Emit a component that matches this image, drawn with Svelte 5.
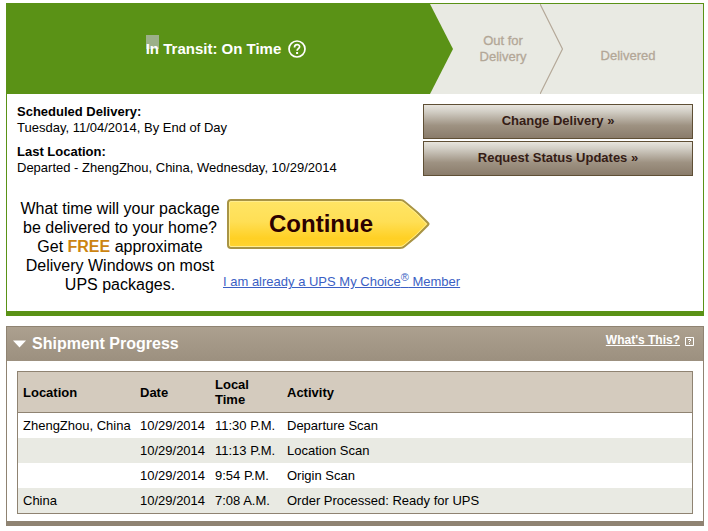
<script>
  const trackingNote = {
    delivery: 'Tuesday, 11/04/2014, By End of Day',
    location: 'Departed - ZhengZhou, China, Wednesday, 10/29/2014'
  }

  const scans = [
    { location: 'ZhengZhou, China', date: '10/29/2014', time: '11:30 P.M.', activity: 'Departure Scan' },
    { location: '', date: '10/29/2014', time: '11:13 P.M.', activity: 'Location Scan' },
    { location: '', date: '10/29/2014', time: '9:54 P.M.', activity: 'Origin Scan' },
    { location: 'China', date: '10/29/2014', time: '7:08 A.M.', activity: 'Order Processed: Ready for UPS' }
  ]
</script>

<main>
  <section class="status">
    <!-- Delivery steps -->
    <div class="steps">
      <div class="step current">
        <span><mark>In</mark> Transit: On Time</span>
        <svg class="help" viewBox="0 0 18 18" aria-hidden="true">
          <circle cx="9" cy="9" r="8" />
          <path d="M6.500 7.400c0-3.700 5.100-3.500 5.100-.6 0 1.900-2.500 1.900-2.500 4" />
          <rect x="8.100" y="12" width="2" height="2" />
        </svg>
      </div>
      <svg class="arrow" viewBox="0 0 23 90" aria-hidden="true">
        <path class="solid" d="M0 0L23 45L0 90z" />
      </svg>
      <div class="step next">Out for Delivery</div>
      <svg class="arrow" viewBox="0 0 23 90" aria-hidden="true">
        <path class="line" d="M0 0L22.5 45L0 90" />
      </svg>
      <div class="step last">Delivered</div>
    </div>

    <div class="summary">
      <dl>
        <dt>Scheduled Delivery:</dt>
        <dd>{trackingNote.delivery}</dd>
        <dt>Last Location:</dt>
        <dd>{trackingNote.location}</dd>
      </dl>
      <div class="actions">
        <button>Change Delivery »</button>
        <button>Request Status Updates »</button>
      </div>
    </div>

    <!-- My Choice promo -->
    <div class="promo">
      <p>What time will your package be delivered to your home? Get <strong>FREE</strong> approximate Delivery Windows on most UPS packages.</p>
      <div class="join">
        <button class="continue">
          <svg viewBox="0 0 204 52" aria-hidden="true">
            <defs>
              <linearGradient id="gold" x1="0" y1="0" x2="0" y2="1">
                <stop offset="0" stop-color="#ffe566" />
                <stop offset="0.45" stop-color="#ffdf55" />
                <stop offset="0.8" stop-color="#ffd024" />
                <stop offset="1" stop-color="#ffd433" />
              </linearGradient>
            </defs>
            <path class="edge" d="M5 2H174Q177 2 179 4Q192 14 202 25Q203 26 202 27Q192 38 179 48Q177 50 174 50H5Q2 50 2 47V5Q2 2 5 2z" />
            <path class="shine" d="M5 3.5H174Q176 3.5 178 5Q191 15 200.5 26Q191 37 178 47Q176 48.5 174 48.5H5Q3.5 48.5 3.5 47V5Q3.5 3.5 5 3.5z" />
          </svg>
          <span>Continue</span>
        </button>
        <a href="#member">I am already a UPS My Choice<sup>®</sup> Member</a>
      </div>
    </div>
  </section>

  <section class="progress">
    <header>
      <svg class="toggle" viewBox="0 0 13 8" aria-hidden="true">
        <path d="M0 0.5H13L6.5 7.5z" />
      </svg>
      <h2>Shipment Progress</h2>
      <a href="#help">What's This?</a>
      <svg class="hint" viewBox="0 0 9 9" aria-hidden="true">
        <path class="frame" d="M0.5 0.5H8.5V8.5H0.5z" />
        <path class="dots" d="M3 2h3v1h-3zM5 3h1v1h-1zM4 4h1v1h-1zM4 6h1v1h-1z" />
      </svg>
    </header>
    <div class="scans">
      <table>
        <thead>
          <tr>
            <th class="place">Location</th>
            <th class="date">Date</th>
            <th class="time">Local Time</th>
            <th>Activity</th>
          </tr>
        </thead>
        <tbody>
          {#each scans as scan}
            <tr>
              <td>{scan.location}</td>
              <td>{scan.date}</td>
              <td>{scan.time}</td>
              <td>{scan.activity}</td>
            </tr>
          {/each}
        </tbody>
      </table>
    </div>
  </section>
</main>

<style>
  :global(body) {
    margin: 0;
    background: #fff;
  }

  main {
    display: flex;
    flex-direction: column;
    gap: 10px;
    padding: 3px 4px 4px 6px;
    font: 13px/16px "Liberation Sans", Arial, sans-serif;
    color: #000;
  }

  button {
    font-family: inherit;
    cursor: pointer;
  }

  .status {
    border: 1px solid #5a9216;
    border-bottom-width: 5px;
  }

  /* Steps */
  .steps {
    display: flex;
    height: 90px;
    background: #e9eae3;
    color: #b3a797;
  }

  .step {
    display: flex;
    align-items: center;
    justify-content: center;
    box-sizing: border-box;
    text-align: center;
    -webkit-text-stroke: 0.3px;
  }

  .current {
    flex: 1;
    gap: 7px;
    padding-left: 15px;
    background: #5a9216;
    color: #fff;
    font-size: 15px;
    font-weight: bold;
    -webkit-text-stroke: 0;
  }

  /* Selection box sits a little above the letters */
  mark {
    padding-top: 5px;
    background: linear-gradient(#9cb089, #9cb089) no-repeat 0 0 / 100% 14px;
    color: inherit;
  }

  .next {
    width: 87px;
    padding-left: 13px;
  }

  .last {
    width: 140px;
    padding: 14px 10px 0 0;
  }

  .arrow {
    width: 23px;
    height: 90px;
  }

  .solid {
    fill: #5a9216;
  }

  .line {
    fill: none;
    stroke: #b3a797;
    stroke-width: 1.2;
  }

  .help {
    width: 18px;
    height: 18px;
    fill: none;
    stroke: #fff;
    stroke-width: 1.7;
  }

  .help rect {
    fill: #fff;
    stroke: none;
  }

  /* Summary */
  .summary {
    display: flex;
    justify-content: space-between;
    padding: 10px 10px 0;
  }

  dl {
    margin: 0;
  }

  dt {
    font-weight: bold;
  }

  dd {
    margin: 0 0 8px;
  }

  .actions {
    display: flex;
    flex-direction: column;
    gap: 2px;
    width: 270px;
  }

  .actions button {
    height: 35px;
    padding: 0 0 2px;
    border: 1px solid #5f4f35;
    background: linear-gradient(#e8e5de, #d2cec5 20%, #9e9282 62%, #8a7c6b);
    color: #351c15;
    font-size: 13px;
    font-weight: bold;
  }

  /* Promo */
  .promo {
    display: flex;
    padding: 14px 10px 17px;
  }

  .promo p {
    width: 206px;
    margin: 1px 0 0;
    font-size: 16px;
    line-height: 19px;
    text-align: center;
  }

  .promo strong {
    color: #cc8411;
  }

  .join {
    display: flex;
    flex-direction: column;
    align-items: flex-start;
    gap: 24px;
  }

  .continue {
    display: grid;
    place-items: center;
    margin-left: 3px;
    padding: 0;
    border: 0;
    background: none;
    color: #2b0000;
    font-size: 24px;
    font-weight: bold;
  }

  .continue svg,
  .continue span {
    grid-area: 1 / 1;
  }

  .continue svg {
    width: 204px;
    height: 52px;
  }

  .continue span {
    padding-right: 14px;
  }

  .edge {
    fill: url(#gold);
    stroke: #a89445;
    stroke-width: 2;
  }

  .shine {
    fill: none;
    stroke: #ffed8f;
  }

  .join a {
    color: #3b5fc4;
  }

  sup {
    font-size: 11px;
    line-height: 0;
  }

  /* Shipment progress */
  .progress {
    border: 1px solid #8f8372;
    border-bottom-width: 5px;
  }

  header {
    display: flex;
    align-items: center;
    height: 34px;
    padding: 0 9px 0 6px;
    background: linear-gradient(#aca08f, #9c907f);
    color: #fff;
  }

  .toggle {
    width: 13px;
    height: 8px;
    margin-right: 6px;
    fill: #fff;
  }

  h2 {
    flex: 1;
    margin: 0;
    font-size: 16px;
  }

  header a {
    padding-bottom: 8px;
    color: #fff;
    font-size: 12px;
    font-weight: bold;
  }

  .hint {
    width: 9px;
    height: 9px;
    margin: 0 0 6px 5px;
  }

  .frame {
    fill: none;
    stroke: #fff;
  }

  .dots {
    fill: #fff;
  }

  .scans {
    padding: 10px 10px 7px;
  }

  table {
    width: 100%;
    border: 1px solid #8f8372;
    border-collapse: collapse;
    table-layout: fixed;
  }

  th,
  td {
    padding: 5px;
    line-height: 15px;
    text-align: left;
    white-space: nowrap;
  }

  th {
    height: 30px;
    border-bottom: 1px solid #8f8372;
    background: #d4cbbe;
    white-space: normal;
  }

  .place {
    width: 107px;
  }

  .date {
    width: 65px;
  }

  .time {
    width: 62px;
  }

  tbody tr:nth-child(even) {
    background: #e9eae3;
  }
</style>
